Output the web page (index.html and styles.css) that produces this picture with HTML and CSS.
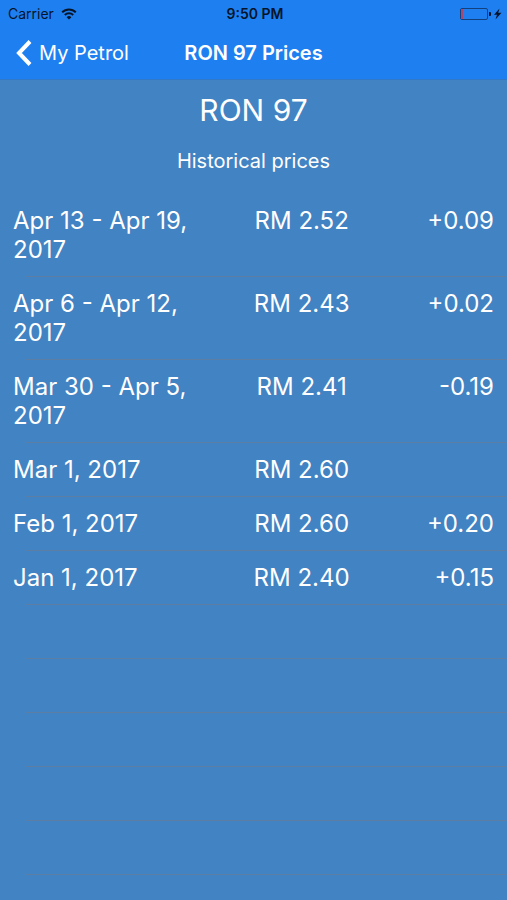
FILE: index.html
```html
<!DOCTYPE html>
<html lang="en">
<head>
    <meta charset="UTF-8">
    <meta name="viewport" content="width=device-width, initial-scale=1.0">
    <title>RON 97 Prices</title>
    <link rel="stylesheet" href="styles.css">
</head>
<body>

<header>
    <div class="status-bar">
        <div class="carrier">
            <span>Carrier</span>
            <svg width="16" height="12" viewBox="0 0 16 12" fill="none" stroke="#06142b" stroke-width="2">
                <path d="M1.2 4.2a9.6 9.6 0 0 1 13.6 0"/>
                <path d="M3.8 7a6 6 0 0 1 8.4 0"/>
                <path d="M8 11.6L5.6 9.2a3.4 3.4 0 0 1 4.8 0z" fill="#06142b" stroke="none"/>
            </svg>
        </div>
        <span class="time">9:50 PM</span>
        <div class="battery">
            <svg width="42" height="14" viewBox="0 0 42 14">
                <rect x="0.5" y="1.5" width="27" height="11" rx="1.5" fill="none" stroke="#123f7d"/>
                <rect x="1" y="2" width="2" height="10" fill="#a8466f"/>
                <path d="M29 5h1a1 1 0 0 1 1 1v2a1 1 0 0 1-1 1h-1z" fill="#06142b"/>
                <path d="M39.5 1.5L34 7.8h3L35.5 12.5l6-6.7h-3.3z" fill="#06142b"/>
            </svg>
        </div>
    </div>
    <nav class="nav-bar">
        <a class="back" href="#">
            <svg width="16" height="26" viewBox="0 0 16 26" fill="none" stroke="#fff" stroke-width="4">
                <path d="M14 1.5L3 13l11 11.5"/>
            </svg>
            My Petrol
        </a>
        <h1>RON 97 Prices</h1>
    </nav>
</header>

<main>
    <h2>RON 97</h2>
    <p class="subtitle">Historical prices</p>

    <table class="prices">
        <tr>
            <td class="date">Apr 13 - Apr 19, 2017</td>
            <td class="price">RM 2.52</td>
            <td class="change">+0.09</td>
        </tr>
        <tr>
            <td class="date">Apr 6 - Apr 12, 2017</td>
            <td class="price">RM 2.43</td>
            <td class="change">+0.02</td>
        </tr>
        <tr>
            <td class="date">Mar 30 - Apr 5, 2017</td>
            <td class="price">RM 2.41</td>
            <td class="change">-0.19</td>
        </tr>
        <tr>
            <td class="date">Mar 1, 2017</td>
            <td class="price">RM 2.60</td>
            <td class="change"></td>
        </tr>
        <tr>
            <td class="date">Feb 1, 2017</td>
            <td class="price">RM 2.60</td>
            <td class="change">+0.20</td>
        </tr>
        <tr>
            <td class="date">Jan 1, 2017</td>
            <td class="price">RM 2.40</td>
            <td class="change">+0.15</td>
        </tr>
    </table>
    <div class="empty-rows"></div>
</main>

</body>
</html>
```
FILE: styles.css
```css
* {
    box-sizing: border-box;
}
body {
    display: flex;
    flex-direction: column;
    min-height: 100vh;
    margin: 0;
    font-family: Inter, "Liberation Sans", sans-serif;
    background-color: #4283c3;
    color: white;
}
header {
    background-color: #1e80f0;
    border-bottom: 1px solid #3079c9;
}
.status-bar {
    display: grid;
    grid-template-columns: 1fr auto 1fr;
    align-items: center;
    height: 27px;
    padding: 0 5px 0 8px;
    font-size: 14px;
    color: #06142b;
}
.carrier {
    display: flex;
    align-items: center;
    gap: 7px;
}
.time {
    font-weight: 600;
}
.battery {
    display: flex;
    justify-content: flex-end;
}
.nav-bar {
    display: grid;
    grid-template-columns: 1fr auto 1fr;
    align-items: center;
    height: 52px;
    padding: 0 16px;
}
.back {
    display: flex;
    align-items: center;
    gap: 7px;
    font-size: 20px;
    color: white;
    text-decoration: none;
}
h1 {
    margin: 0;
    font-size: 20px;
    font-weight: 600;
}
main {
    display: flex;
    flex: 1;
    flex-direction: column;
}
h2 {
    margin: 12px 0 0;
    font-size: 30px;
    font-weight: 400;
    line-height: 36px;
    text-align: center;
}
.subtitle {
    margin: 20px 0;
    font-size: 20px;
    line-height: 26px;
    text-align: center;
}
.prices {
    width: 100%;
    table-layout: fixed;
    border-collapse: collapse;
    font-size: 24px;
    line-height: 29px;
}
/* separator starts 26px from the left edge */
.prices tr {
    background: linear-gradient(#5c7da4, #5c7da4) right bottom / calc(100% - 26px) 1px no-repeat;
}
.prices td {
    padding: 12px 0 13px;
    vertical-align: top;
}
.prices .date {
    width: 44%;
    padding-left: 13px;
}
.prices .price {
    width: 31%;
    text-align: center;
}
.prices .change {
    padding-right: 13px;
    text-align: right;
}
.empty-rows {
    flex: 1;
    margin-left: 26px;
    background: repeating-linear-gradient(transparent 0 53px, #5c7da4 53px 54px);
}
```
